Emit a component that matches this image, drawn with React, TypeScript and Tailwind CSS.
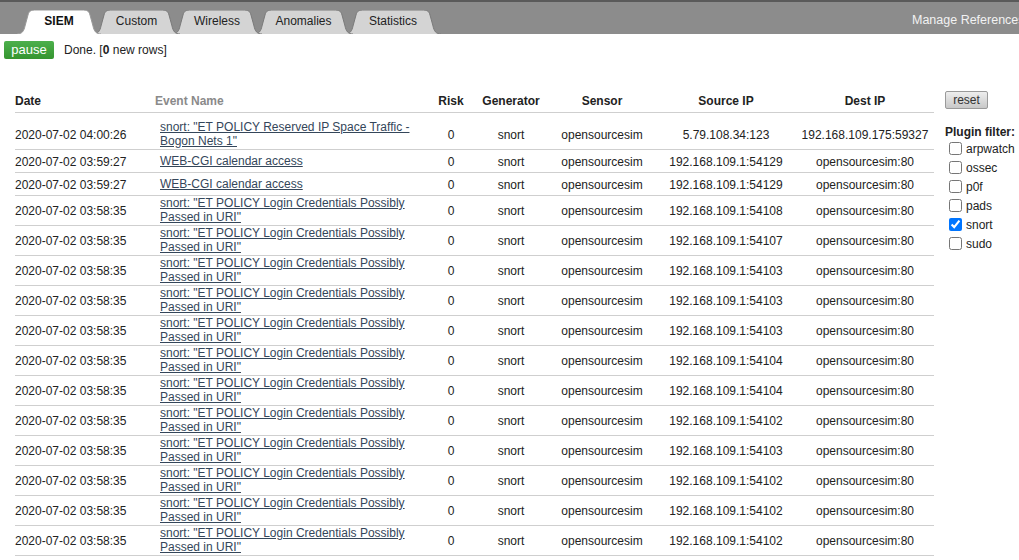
import React from "react";

const tabs = [
  { label: "SIEM", w: 84, active: true },
  { label: "Custom", w: 87 },
  { label: "Wireless", w: 90 },
  { label: "Anomalies", w: 99 },
  { label: "Statistics", w: 96 },
];

function tabPath(W: number) {
  const H = 24;
  return `M0,${H} C5,${H} 7,${H - 3} 8,${H - 8} L11,5 C12,1 14,0 19,0 L${W - 19},0 C${W - 14},0 ${W - 12},1 ${W - 11},5 L${W - 8},${H - 8} C${W - 7},${H - 3} ${W - 5},${H} ${W},${H}`;
}

type Row = {
  date: string;
  ev: [string, string?];
  src: string;
  dst: string;
  h: string;
};

const LOGIN: [string, string] = ['snort: "ET POLICY Login Credentials Possibly', 'Passed in URI"'];

const rows: Row[] = [
  { date: "2020-07-02 04:00:26", ev: ['snort: "ET POLICY Reserved IP Space Traffic -', 'Bogon Nets 1"'], src: "5.79.108.34:123", dst: "192.168.109.175:59327", h: "h-[37px] pt-[7px]" },
  { date: "2020-07-02 03:59:27", ev: ["WEB-CGI calendar access"], src: "192.168.109.1:54129", dst: "opensourcesim:80", h: "h-[23px] pt-[1px]" },
  { date: "2020-07-02 03:59:27", ev: ["WEB-CGI calendar access"], src: "192.168.109.1:54129", dst: "opensourcesim:80", h: "h-[23px] pt-[1px]" },
  { date: "2020-07-02 03:58:35", ev: LOGIN, src: "192.168.109.1:54108", dst: "opensourcesim:80", h: "h-[30px]" },
  { date: "2020-07-02 03:58:35", ev: LOGIN, src: "192.168.109.1:54107", dst: "opensourcesim:80", h: "h-[30px]" },
  { date: "2020-07-02 03:58:35", ev: LOGIN, src: "192.168.109.1:54103", dst: "opensourcesim:80", h: "h-[30px]" },
  { date: "2020-07-02 03:58:35", ev: LOGIN, src: "192.168.109.1:54103", dst: "opensourcesim:80", h: "h-[30px]" },
  { date: "2020-07-02 03:58:35", ev: LOGIN, src: "192.168.109.1:54103", dst: "opensourcesim:80", h: "h-[30px]" },
  { date: "2020-07-02 03:58:35", ev: LOGIN, src: "192.168.109.1:54104", dst: "opensourcesim:80", h: "h-[30px]" },
  { date: "2020-07-02 03:58:35", ev: LOGIN, src: "192.168.109.1:54104", dst: "opensourcesim:80", h: "h-[30px]" },
  { date: "2020-07-02 03:58:35", ev: LOGIN, src: "192.168.109.1:54102", dst: "opensourcesim:80", h: "h-[30px]" },
  { date: "2020-07-02 03:58:35", ev: LOGIN, src: "192.168.109.1:54103", dst: "opensourcesim:80", h: "h-[30px]" },
  { date: "2020-07-02 03:58:35", ev: LOGIN, src: "192.168.109.1:54102", dst: "opensourcesim:80", h: "h-[30px]" },
  { date: "2020-07-02 03:58:35", ev: LOGIN, src: "192.168.109.1:54102", dst: "opensourcesim:80", h: "h-[30px]" },
  { date: "2020-07-02 03:58:35", ev: LOGIN, src: "192.168.109.1:54102", dst: "opensourcesim:80", h: "h-[30px]" },
];

const plugins = [
  { name: "arpwatch", checked: false },
  { name: "ossec", checked: false },
  { name: "p0f", checked: false },
  { name: "pads", checked: false },
  { name: "snort", checked: true },
  { name: "sudo", checked: false },
];

const grid = "grid grid-cols-[140px_273px_46px_74px_108px_140px_138px] items-center border-b border-[#cfcfcf]";

export default function App() {
  return (
    <div className="w-[1019px] h-[560px] overflow-hidden bg-white text-[#222] font-['Liberation_Sans',Arial,sans-serif]">
      {/* top bar */}
      <div className="h-[34px] bg-[#8c8c8c] border-t-2 border-[#5a5a5a] flex items-end overflow-hidden">
        <div className="flex items-end pl-[17px]">
          {tabs.map((t, i) => (
            <div
              key={t.label}
              className={`relative h-[24px] flex items-center justify-center text-[12px] ${i > 0 ? "-ml-[8px]" : ""} ${t.active ? "font-bold text-[#111]" : "text-[#222]"}`}
              style={{ width: t.w, zIndex: 10 - i }}
            >
              <svg className="absolute inset-0" width={t.w} height={24} viewBox={`0 0 ${t.w} 24`}>
                <path d={tabPath(t.w) + " Z"} fill={t.active ? "#ffffff" : "#d4d4d4"} />
                <path d={tabPath(t.w)} fill="none" stroke={t.active ? "#9a9a9a" : "#7a7a7a"} strokeWidth={1} />
              </svg>
              <span className="relative pb-[3px]">{t.label}</span>
            </div>
          ))}
        </div>
        <div className="self-center mt-[4px] ml-[471px] text-[12.5px] text-[#f2f2f2] whitespace-nowrap">Manage References</div>
      </div>

      <div className="flex">
        {/* left main */}
        <div className="w-[945px]">
          <div className="flex items-center h-[18px] mt-[7px]">
            <div className="ml-[4px] w-[50px] h-[18px] rounded-[2px] bg-gradient-to-b from-[#4cb04c] to-[#35952f] text-white text-[13px] flex items-center justify-center">
              pause
            </div>
            <div className="ml-[10px] text-[12px] text-[#222]">
              Done. [<span className="font-bold">0</span> new rows]
            </div>
          </div>

          <div className="ml-[15px] mt-[31px] w-[919px] text-[11px]">
            <div className={`${grid} h-[23px] text-[12px] font-bold`}>
              <div>Date</div>
              <div className="text-[#8a8a8a]">Event Name</div>
              <div className="text-center">Risk</div>
              <div className="text-center">Generator</div>
              <div className="text-center">Sensor</div>
              <div className="text-center">Source IP</div>
              <div className="text-center">Dest IP</div>
            </div>
            {rows.map((r, i) => (
              <div key={i} className={`${grid} ${r.h} text-[12px]`}>
                <div>{r.date}</div>
                <div className="pl-[5px] leading-[13.5px] text-[#34465a] underline">
                  <div>{r.ev[0]}</div>
                  {r.ev[1] && <div>{r.ev[1]}</div>}
                </div>
                <div className="text-center">0</div>
                <div className="text-center">snort</div>
                <div className="text-center">opensourcesim</div>
                <div className="text-center">{r.src}</div>
                <div className="text-center">{r.dst}</div>
              </div>
            ))}
          </div>
        </div>

        {/* right panel */}
        <div className="flex-1 pt-[57px]">
          <div className="w-[43px] h-[18px] rounded-[2px] border border-[#9a9a9a] bg-gradient-to-b from-[#eeeeee] to-[#c8c8c8] text-[12px] text-[#333] flex items-center justify-center">
            reset
          </div>
          <div className="mt-[14px] text-[12px] font-bold">Plugin filter:</div>
          <div className="-mt-[2px] flex flex-col">
            {plugins.map((p) => (
              <label key={p.name} className="h-[19px] flex items-center text-[12px]">
                <input type="checkbox" defaultChecked={p.checked} className="ml-[4px] m-0 w-[13px] h-[13px]" />
                <span className="ml-[4px]">{p.name}</span>
              </label>
            ))}
          </div>
        </div>
      </div>
    </div>
  );
}
